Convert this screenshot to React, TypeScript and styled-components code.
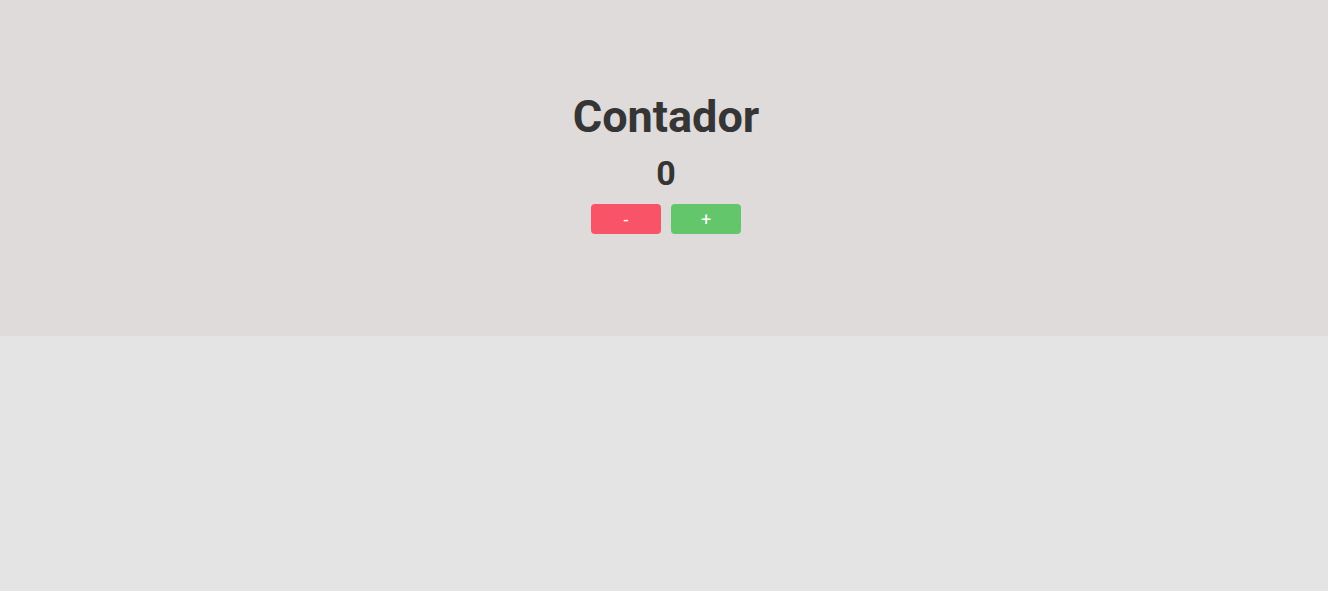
import { useState } from 'react'
import styled, { createGlobalStyle } from 'styled-components'

const GlobalStyle = createGlobalStyle`
  * {
    box-sizing: border-box;
  }
  body {
    margin: 0;
    background-color: #e5e4e4;
    font-family: Roboto, 'Liberation Sans', sans-serif;
  }
`

export default function App() {
  const [count, setCount] = useState(0)

  return (
    <>
      <GlobalStyle />
      <Section>
        <Title>Contador</Title>
        <Count>{count}</Count>
        <Buttons>
          <CounterButton $variant="minus" onClick={() => setCount(count - 1)}>
            -
          </CounterButton>
          <CounterButton $variant="plus" onClick={() => setCount(count + 1)}>
            +
          </CounterButton>
        </Buttons>
      </Section>
    </>
  )
}

const Section = styled.section`
  display: flex;
  flex-direction: column;
  align-items: center;
  justify-content: center;
  height: 336px;
  padding: 0 0 12px 4px;
  background-color: #dfdbda;
  color: #353535;
`

const Title = styled.h1`
  margin: 0;
  font-size: 45px;
  font-weight: 700;
  line-height: 1.2;
`

const Count = styled.h2`
  margin: 9px 0 11px;
  font-size: 34px;
  font-weight: 700;
  line-height: 1.2;
`

const Buttons = styled.div`
  display: flex;
  gap: 10px;
`

const CounterButton = styled.button<{ $variant: 'minus' | 'plus' }>`
  width: 70px;
  height: 30px;
  border: none;
  border-radius: 4px;
  background-color: ${({ $variant }) =>
    $variant === 'minus' ? '#f95368' : '#63c66a'};
  color: #fff;
  font-family: Roboto, 'Liberation Sans', sans-serif;
  font-size: 18px;
  cursor: pointer;
`
